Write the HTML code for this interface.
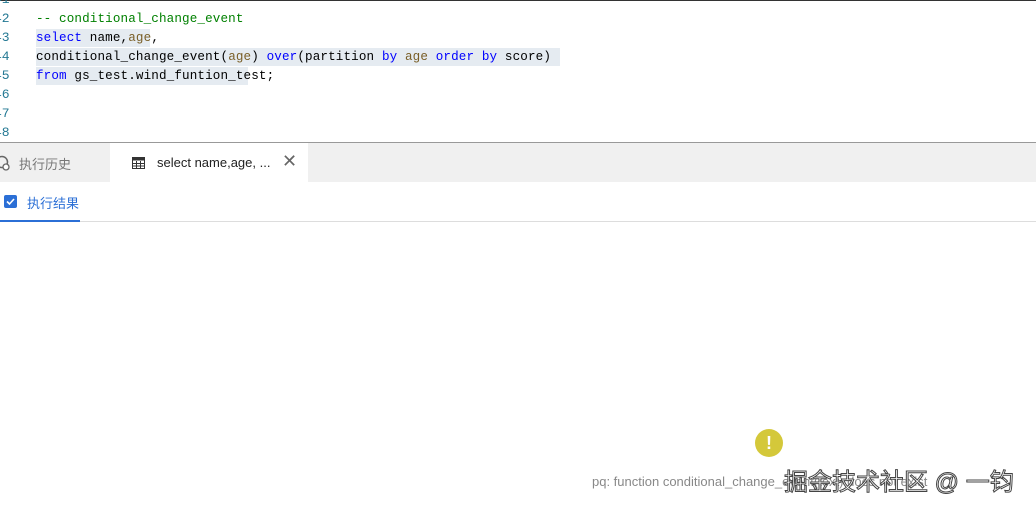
<!DOCTYPE html>
<html><head><meta charset="utf-8"><style>
body{margin:0;width:1036px;height:507px;background:#fff;position:relative;overflow:hidden;font-family:"Liberation Sans","Noto Sans CJK SC",sans-serif}
.topline{position:absolute;left:0;top:0;width:1036px;height:1px;background:#333}
.ln{position:absolute;left:-6px;font:13px "Liberation Mono",monospace;color:#237893}
.code{position:absolute;left:36px;font:12.6px/19px "Liberation Mono","DejaVu Sans Mono",monospace;letter-spacing:0.13px;color:#000;white-space:pre}
.sel{position:absolute;background:#e5ebf1}
.k{color:#0000ff}.c{color:#008000}.v{color:#795e26}
.tabs{position:absolute;left:0;top:142px;width:1036px;height:40px;background:#f0f0f0;border-top:1px solid #999;box-sizing:border-box}
.tab2{position:absolute;left:110px;top:0;width:198px;height:40px;background:#fff}
</style></head><body>
<div class="topline"></div>
<div class="sel" style="left:36px;top:29px;width:114px;height:18px"></div>
<div class="sel" style="left:36px;top:48px;width:524px;height:18px"></div>
<div class="sel" style="left:36px;top:67px;width:212px;height:18px"></div>
<div class="ln" style="top:-8px">41</div>
<div class="ln" style="top:11px">42</div>
<div class="ln" style="top:30px">43</div>
<div class="ln" style="top:49px">44</div>
<div class="ln" style="top:68px">45</div>
<div class="ln" style="top:87px">46</div>
<div class="ln" style="top:106px">47</div>
<div class="ln" style="top:125px">48</div>
<div class="code" style="top:10px"><span class="c">-- conditional_change_event</span>
<span class="k">select</span> name,<span class="v">age</span>,
conditional_change_event(<span class="v">age</span>) <span class="k">over</span>(partition <span class="k">by</span> <span class="v">age</span> <span class="k">order</span> <span class="k">by</span> score)
<span class="k">from</span> gs_test.wind_funtion_test;</div>
<div class="tabs">
<svg style="position:absolute;left:-4px;top:12px" width="14" height="16" viewBox="0 0 14 16"><circle cx="6" cy="7" r="5.5" fill="none" stroke="#666" stroke-width="1.5"/><circle cx="10" cy="12" r="3" fill="#fff" stroke="#666" stroke-width="1.3"/></svg>
<div style="position:absolute;left:19px;top:11px;font-size:13px;color:#777">执行历史</div>
<div class="tab2">
<svg style="position:absolute;left:22px;top:14px" width="13" height="12" viewBox="0 0 13 12"><rect x="0.5" y="0.5" width="12" height="11" fill="#fff" stroke="#333"/><rect x="0.5" y="0.5" width="12" height="3" fill="#333"/><path d="M1 6.5h11M1 9h11M4.5 4v8M8.5 4v8" stroke="#333"/></svg>
<div style="position:absolute;left:47px;top:12px;font-size:13px;color:#222">select name,age, ...</div>
<div style="position:absolute;left:172px;top:8px;font-size:18px;color:#666">✕</div>
</div></div>
<svg style="position:absolute;left:4px;top:195px" width="13" height="13" viewBox="0 0 13 13"><rect width="13" height="13" rx="2" fill="#2b6fd6"/><path d="M3 6.5l2.5 2.5 4.5-5" stroke="#fff" stroke-width="1.6" fill="none"/></svg>
<div style="position:absolute;left:27px;top:193px;font-size:13px;color:#2b6fd6">执行结果</div>
<div style="position:absolute;left:0;top:220px;width:80px;height:2px;background:#2b6fd6"></div>
<div style="position:absolute;left:80px;top:221px;width:956px;height:1px;background:#ddd"></div>
<div style="position:absolute;left:755px;top:429px;width:28px;height:28px;border-radius:50%;background:#d4c83a;color:#fff;font-weight:bold;font-size:18px;text-align:center;line-height:28px">!</div>
<div style="position:absolute;left:592px;top:474px;font-size:13px;color:#888;white-space:nowrap">pq: function conditional_change_event(text) does not exist</div>
<div style="position:absolute;left:784px;top:462px;font-size:24px;color:#fff;-webkit-text-stroke:1px #444;white-space:nowrap">掘金技术社区 @ 一钧</div>
</body></html>
